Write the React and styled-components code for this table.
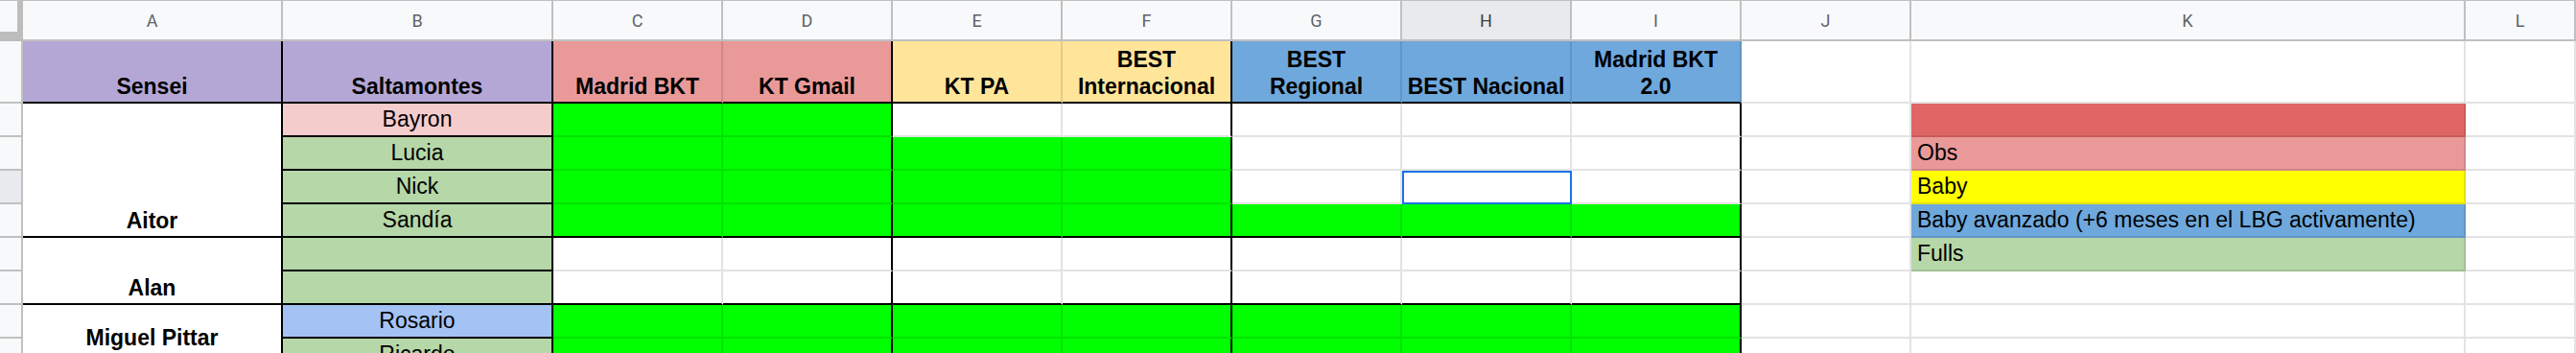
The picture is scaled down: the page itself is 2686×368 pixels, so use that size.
import React from 'react';
import styled, { createGlobalStyle, css } from 'styled-components';

const GRID = 'rgba(0, 0, 0, 0.11)';
const HEAD_LINE = '#c0c0c0';
const GREEN = '#00ff00';

const GlobalStyle = createGlobalStyle`
  html, body {
    margin: 0;
    padding: 0;
    background: #fff;
    overflow: hidden;
  }
  body {
    font-family: "Liberation Sans", Arial, sans-serif;
    color: #000;
  }
`;

const Sheet = styled.div`
  display: grid;
  grid-template-columns: 24px 271px 282px repeat(8, 177px) 578px 1fr;
  grid-template-rows: 43px 65px repeat(8, 35px);
  width: 2686px;
  height: 368px;
  overflow: hidden;
  font-family: "Liberation Sans", Arial, sans-serif;
  font-size: 23px;
`;

const Corner = styled.div`
  background: #bdbdbd;
  border-top: 1px solid ${HEAD_LINE};
`;

const CornerBox = styled.div`
  width: 18px;
  height: 32px;
  background: #f8f9fa;
`;

const ColHead = styled.div`
  display: flex;
  align-items: center;
  justify-content: center;
  background: ${(p) => (p.$active ? '#e8eaed' : '#f8f9fa')};
  color: ${(p) => (p.$active ? '#3c4043' : '#5f6368')};
  border-top: 1px solid ${HEAD_LINE};
  border-right: 2px solid ${HEAD_LINE};
  border-bottom: 2px solid ${HEAD_LINE};
  font-family: Roboto, "Liberation Sans", sans-serif;
  font-size: 18px;
`;

const RowHead = styled.div`
  background: ${(p) => (p.$active ? '#e8eaed' : '#f8f9fa')};
  border-right: 2px solid ${HEAD_LINE};
  border-bottom: 2px solid ${HEAD_LINE};
  grid-row: ${(p) => (p.$span ? `span ${p.$span}` : 'auto')};
`;

const Cell = styled.div`
  position: relative;
  display: flex;
  align-items: ${(p) => (p.$end ? 'flex-end' : 'center')};
  justify-content: ${(p) => (p.$left ? 'flex-start' : 'center')};
  padding: ${(p) => (p.$end ? '0 6px 2px' : '0 6px 1px')};
  background: ${(p) => p.$bg || '#fff'};
  border-right: 2px solid ${(p) => (p.$right ? '#000' : GRID)};
  border-bottom: 2px solid ${(p) => (p.$bottom ? '#000' : GRID)};
  grid-row: ${(p) => (p.$span ? `span ${p.$span}` : 'auto')};
  font-weight: ${(p) => (p.$bold ? 700 : 400)};
  line-height: 28px;
  text-align: center;
  white-space: pre;
  ${(p) =>
    p.$selected &&
    css`
      &::after {
        content: '';
        position: absolute;
        top: 0;
        left: 0;
        right: -2px;
        bottom: -2px;
        border: 2px solid #1a73e8;
        pointer-events: none;
      }
    `}
`;

const columns = ['A', 'B', 'C', 'D', 'E', 'F', 'G', 'H', 'I', 'J', 'K', 'L'];

const headers = [
  { text: 'Sensei', bg: '#b4a7d6', right: true },
  { text: 'Saltamontes', bg: '#b4a7d6', right: true },
  { text: 'Madrid BKT', bg: '#ea9999' },
  { text: 'KT Gmail', bg: '#ea9999', right: true },
  { text: 'KT PA', bg: '#ffe599' },
  { text: 'BEST\nInternacional', bg: '#ffe599', right: true },
  { text: 'BEST\nRegional', bg: '#6fa8dc' },
  { text: 'BEST Nacional', bg: '#6fa8dc' },
  { text: 'Madrid BKT\n2.0', bg: '#6fa8dc' },
];

// senseis with the number of rows they take in column A
const senseis = {
  0: { name: 'Aitor', span: 4, end: true },
  4: { name: 'Alan', span: 2, end: true },
  6: { name: 'Miguel Pittar', span: 2 },
};

const students = [
  { name: 'Bayron', bg: '#f4cccc', done: 2, groupEnd: false },
  { name: 'Lucia', bg: '#b6d7a8', done: 4, groupEnd: false },
  { name: 'Nick', bg: '#b6d7a8', done: 4, groupEnd: false },
  { name: 'Sandía', bg: '#b6d7a8', done: 7, groupEnd: true },
  { name: '', bg: '#b6d7a8', done: 0, groupEnd: false },
  { name: '', bg: '#b6d7a8', done: 0, groupEnd: true },
  { name: 'Rosario', bg: '#a4c2f4', done: 7, groupEnd: false },
  { name: 'Ricardo', bg: '#b6d7a8', done: 7, groupEnd: true },
];

const legend = [
  { text: '', bg: '#e06666' },
  { text: 'Obs', bg: '#ea9999' },
  { text: 'Baby', bg: '#ffff00' },
  { text: 'Baby avanzado (+6 meses en el LBG activamente)', bg: '#6fa8dc' },
  { text: 'Fulls', bg: '#b6d7a8' },
];

const blackRight = [1, 3, 6]; // course columns with a thick line on the right (D, F, I)

export default function App() {
  return (
    <>
      <GlobalStyle />
      <Sheet>
        <Corner>
          <CornerBox />
        </Corner>
        {columns.map((c) => (
          <ColHead key={c} $active={c === 'H'}>
            {c}
          </ColHead>
        ))}

        <RowHead />
        {headers.map((h) => (
          <Cell key={h.text} $bg={h.bg} $right={h.right} $bottom $bold $end>
            {h.text}
          </Cell>
        ))}
        <Cell />
        <Cell />
        <Cell />

        {students.map((s, i) => {
          const sensei = senseis[i];
          const key = legend[i];
          return (
            <React.Fragment key={i}>
              <RowHead $active={i === 2} />
              {sensei && (
                <Cell $span={sensei.span} $right $bottom $bold $end={sensei.end}>
                  {sensei.name}
                </Cell>
              )}
              <Cell $bg={s.bg} $right $bottom>
                {s.name}
              </Cell>
              {Array.from({ length: 7 }).map((_, c) => (
                <Cell
                  key={c}
                  $bg={c < s.done ? GREEN : undefined}
                  $right={blackRight.includes(c)}
                  $bottom={s.groupEnd}
                  $selected={i === 2 && c === 5}
                />
              ))}
              <Cell />
              <Cell $bg={key && key.bg} $left>
                {key ? key.text : ''}
              </Cell>
              <Cell />
            </React.Fragment>
          );
        })}
      </Sheet>
    </>
  );
}
